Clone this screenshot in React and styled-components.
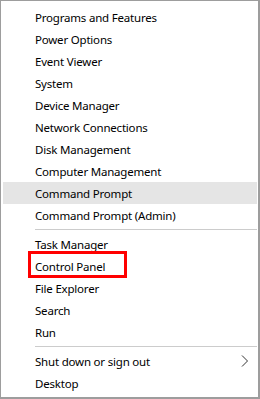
import React from 'react';
import styled, { createGlobalStyle } from 'styled-components';

const GlobalStyle = createGlobalStyle`
  html, body {
    margin: 0;
    padding: 0;
    background: #ffffff;
  }
`;

const Menu = styled.div`
  box-sizing: border-box;
  width: 260px;
  height: 399px;
  background: #ffffff;
  border-style: solid;
  border-color: #9d9d9d;
  border-width: 1px 2px 2px 1px;
  padding: 5px 1px 3px 2px;
  font-family: 'Noto Sans', 'Open Sans', sans-serif;
  font-size: 11.5px;
  letter-spacing: -0.2px;
  color: #000000;
  display: flex;
  flex-direction: column;
`;

const Item = styled.div`
  position: relative;
  height: 22px;
  display: flex;
  align-items: center;
  justify-content: space-between;
  padding: 0 8px 0 32px;
  background: ${(p) => (p.$active ? '#e5e5e5' : 'transparent')};
  white-space: nowrap;
`;

const Separator = styled.div`
  height: 1px;
  margin: 3px 0 3px 32px;
  background: #cccccc;
`;

const Highlight = styled.div`
  position: absolute;
  left: 25px;
  top: -4px;
  width: 99px;
  height: 27px;
  box-sizing: border-box;
  border: 3px solid #ff0000;
  pointer-events: none;
`;

const Chevron = () => (
  <svg width="8" height="12" viewBox="0 0 8 12" fill="none">
    <path d="M1 0.5 L6.5 6 L1 11.5" stroke="#333" strokeWidth="1" />
  </svg>
);

const groups = [
  [
    'Programs and Features',
    'Power Options',
    'Event Viewer',
    'System',
    'Device Manager',
    'Network Connections',
    'Disk Management',
    'Computer Management',
    'Command Prompt',
    'Command Prompt (Admin)',
  ],
  ['Task Manager', 'Control Panel', 'File Explorer', 'Search', 'Run'],
  ['Shut down or sign out', 'Desktop'],
];

export default function App() {
  return (
    <>
      <GlobalStyle />
      <Menu>
        {groups.map((items, gi) => (
          <React.Fragment key={gi}>
            {gi > 0 && <Separator />}
            {items.map((label) => (
              <Item key={label} $active={label === 'Command Prompt'}>
                <span>{label}</span>
                {label === 'Shut down or sign out' && <Chevron />}
                {label === 'Control Panel' && <Highlight />}
              </Item>
            ))}
          </React.Fragment>
        ))}
      </Menu>
    </>
  );
}
